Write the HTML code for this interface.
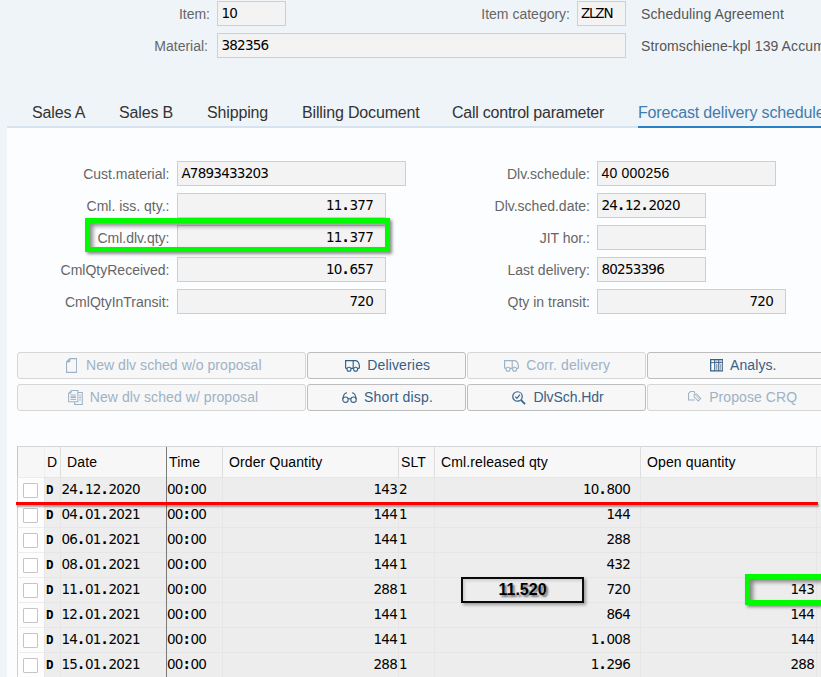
<!DOCTYPE html><html><head><meta charset="utf-8"><title>Scheduling Agreement</title><style>
html,body{margin:0;padding:0;}
body{width:821px;height:677px;overflow:hidden;background:#eff4f9;position:relative;font-family:"Liberation Sans",Arial,sans-serif;font-size:14px;color:#333;}
.abs{position:absolute;}
.lbl{position:absolute;color:#666;font-size:14px;line-height:26px;height:26px;text-align:right;white-space:nowrap;}
.inp{position:absolute;box-sizing:border-box;height:25px;border:1px solid #cfcfcf;background:#f3f3f3;font-family:"DejaVu Sans","Liberation Mono",monospace;font-size:13.5px;letter-spacing:-0.76px;line-height:23px;color:#000;padding:0 3.4px;white-space:nowrap;overflow:hidden;}
.inp.r{text-align:right;padding-right:12px;}
.txt{position:absolute;color:#555;font-size:14px;letter-spacing:0.1px;line-height:24px;white-space:nowrap;}
.tab{position:absolute;top:101px;font-size:16px;letter-spacing:-0.15px;line-height:24px;color:#333;white-space:nowrap;}
.tab.act{color:#427cac;}
.panel{position:absolute;left:7px;top:128px;width:820px;height:560px;background:#fcfdfe;}
.btn{position:absolute;box-sizing:border-box;height:27px;border:1px solid #bdbdbd;border-radius:3px;background:#f7f7f7;color:#346187;font-size:14px;letter-spacing:0.15px;line-height:25px;text-align:left;white-space:nowrap;}
.btn.dis{border-color:#d6d6d6;color:#9db2c6;}
.btn svg{display:block;}
.bi{position:absolute;}
.bt{position:absolute;top:0;}
.th{position:absolute;top:446px;height:31px;box-sizing:border-box;background:#f7f7f7;border-left:1px solid #dedede;border-top:1px solid #d6d6d6;color:#000;font-size:14px;letter-spacing:0.12px;line-height:30px;padding-left:6px;white-space:nowrap;overflow:hidden;}
.td{position:absolute;height:25px;box-sizing:border-box;background:#ededed;border-left:1px solid #e6e6e6;border-top:1px solid #e6e6e6;font-family:"DejaVu Sans","Liberation Mono",monospace;font-size:13.5px;letter-spacing:-0.76px;line-height:22px;color:#000;white-space:nowrap;overflow:hidden;}
.td.r{text-align:right;}
.sel{position:absolute;left:17px;width:27px;height:25px;box-sizing:border-box;background:#fdfdfd;border-left:1px solid #cfcfcf;border-top:1px solid #ececec;}
.inp i,.td i{font-style:normal;display:inline-block;width:7.83px;text-align:center;letter-spacing:0;font-weight:bold;}
.cb{position:absolute;left:23px;width:15px;height:15px;box-sizing:border-box;border:1px solid #c8c3c8;background:#fff;border-radius:1px;}
</style></head><body>
<div class="lbl" style="left:100px;width:110px;top:1px">Item:</div>
<div class="inp" style="left:217px;top:1px;width:69px">10</div>
<div class="lbl" style="left:430px;width:140px;top:1px">Item category:</div>
<div class="inp" style="left:577px;top:1px;width:49px;letter-spacing:-1.2px;padding-left:3px">ZLZN</div>
<div class="txt" style="left:641px;top:2px">Scheduling Agreement</div>
<div class="lbl" style="left:100px;width:108px;top:33px">Material:</div>
<div class="inp" style="left:217px;top:33px;width:409px">382356</div>
<div class="txt" style="left:641px;top:34px">Stromschiene-kpl 139 Accumulator</div>
<div class="tab" style="left:32px">Sales A</div>
<div class="tab" style="left:119px">Sales B</div>
<div class="tab" style="left:207px">Shipping</div>
<div class="tab" style="left:302px">Billing Document</div>
<div class="tab" style="left:452px;letter-spacing:-0.24px">Call control parameter</div>
<div class="tab act" style="left:638px">Forecast delivery schedule</div>
<div class="abs" style="left:7px;top:126px;width:820px;height:2px;background:#d8e3f0"></div>
<div class="abs" style="left:638px;top:126px;width:190px;height:2px;background:#2a80c4"></div>
<div class="panel"></div>
<div class="lbl" style="left:20px;width:149.5px;top:161px">Cust.material:</div>
<div class="inp" style="left:177px;top:161px;width:229px">A7893433203</div>
<div class="lbl" style="left:20px;width:149.5px;top:193px">Cml. iss. qty.:</div>
<div class="inp r" style="left:177px;top:193px;width:209px">11<i>.</i>377</div>
<div class="lbl" style="left:20px;width:149.5px;top:225px">Cml.dlv.qty:</div>
<div class="inp r" style="left:177px;top:225px;width:209px">11<i>.</i>377</div>
<div class="lbl" style="left:20px;width:149.5px;top:257px">CmlQtyReceived:</div>
<div class="inp r" style="left:177px;top:257px;width:209px">10<i>.</i>657</div>
<div class="lbl" style="left:20px;width:149.5px;top:289px">CmlQtyInTransit:</div>
<div class="inp r" style="left:177px;top:289px;width:209px">720</div>
<div class="lbl" style="left:440px;width:150px;top:161px">Dlv.schedule:</div>
<div class="inp" style="left:597px;top:161px;width:179px;font-family:'Liberation Sans',sans-serif;font-size:14px;letter-spacing:0.2px">40 000256</div>
<div class="lbl" style="left:440px;width:150px;top:193px">Dlv.sched.date:</div>
<div class="inp" style="left:597px;top:193px;width:109px">24<i>.</i>12<i>.</i>2020</div>
<div class="lbl" style="left:440px;width:150px;top:225px">JIT hor.:</div>
<div class="inp" style="left:597px;top:225px;width:109px"></div>
<div class="lbl" style="left:440px;width:150px;top:257px">Last delivery:</div>
<div class="inp" style="left:597px;top:257px;width:109px">80253396</div>
<div class="lbl" style="left:440px;width:150px;top:289px">Qty in transit:</div>
<div class="inp r" style="left:597px;top:289px;width:189px">720</div>
<div class="abs" style="left:85px;top:218px;width:305px;height:34px;box-sizing:border-box;border:5px solid #00fb00;box-shadow:2px 2px 3px rgba(0,0,0,.45), inset 3px 3px 4px rgba(0,0,0,.45)"></div>
<div class="btn dis" style="left:17px;top:352px;width:289px"><span class="bi" style="left:47.5px;top:4.8px"><svg width="11.2" height="15" viewBox="0 0 12 16"><path d="M4.2 .6H11.4V15.4H.6V4.2Z" fill="none" stroke="currentColor" stroke-width="1.2"/><path d="M4.2 .6V4.2H.6Z" fill="currentColor" stroke="currentColor" stroke-width=".8"/></svg></span><span class="bt" style="left:68.0px;letter-spacing:0.05px">New dlv sched w/o proposal</span></div>
<div class="btn" style="left:307px;top:352px;width:159px"><span class="bi" style="left:36.8px;top:6.8px"><svg width="15" height="12" viewBox="0 0 15 12"><path d="M.6 8.3V.6H8.2V8.3 M8.2 .6H10.8C13 .9 14 3 14.4 5.8V8.3 M.6 8.3H2 M6 8.3H8.6 M12.6 8.3H14.4" fill="none" stroke="currentColor" stroke-width="1.15"/><circle cx="4" cy="9.3" r="2" fill="none" stroke="currentColor" stroke-width="1.1"/><circle cx="10.6" cy="9.3" r="2" fill="none" stroke="currentColor" stroke-width="1.1"/></svg></span><span class="bt" style="left:59.2px;letter-spacing:0.16px">Deliveries</span></div>
<div class="btn dis" style="left:467px;top:352px;width:179px"><span class="bi" style="left:36.0px;top:6.8px"><svg width="15" height="12" viewBox="0 0 15 12"><path d="M.6 8.3V.6H8.2V8.3 M8.2 .6H10.8C13 .9 14 3 14.4 5.8V8.3 M.6 8.3H2 M6 8.3H8.6 M12.6 8.3H14.4" fill="none" stroke="currentColor" stroke-width="1.15"/><circle cx="4" cy="9.3" r="2" fill="none" stroke="currentColor" stroke-width="1.1"/><circle cx="10.6" cy="9.3" r="2" fill="none" stroke="currentColor" stroke-width="1.1"/></svg></span><span class="bt" style="left:58.2px;letter-spacing:0.11px">Corr. delivery</span></div>
<div class="btn" style="left:647px;top:352px;width:191px"><span class="bi" style="left:61.5px;top:6.0px"><svg width="13.5" height="12.6" viewBox="0 0 14 13"><path d="M.7 .7H13.3V12.3H.7Z" fill="#fdfdfd" stroke="currentColor" stroke-width="1.3"/><path d="M.7 3.7H13.3" stroke="currentColor" stroke-width="1"/><path d="M4.9 .7V12.3 M9.1 .7V12.3" stroke="currentColor" stroke-width="1.1" fill="none"/><path d="M7 5.2v5.8 M11.2 5.2v5.8" stroke="#8f93a6" stroke-width="1.3" fill="none"/><path d="M6.2 2.2h1.6 M10.4 2.2h1.6" stroke="#8f93a6" stroke-width="1" fill="none"/></svg></span><span class="bt" style="left:82.0px;letter-spacing:0.10px">Analys.</span></div>
<div class="btn dis" style="left:17px;top:384px;width:289px"><span class="bi" style="left:49.8px;top:4.8px"><svg width="15.2" height="15.2" viewBox="0 0 16 16"><path d="M3.6 .6H10.4V12.4H.6V3.6Z" fill="none" stroke="currentColor" stroke-width="1.1"/><path d="M3.6 .6V3.6H.6Z" fill="currentColor"/><path d="M2.6 5.3h5.8 M2.6 10h5.8" stroke="currentColor" stroke-width="1" fill="none"/><path d="M2.6 7.6h5.8" stroke="currentColor" stroke-width="1.8" fill="none"/><path d="M10.4 2.6H15V15.2H7V12.6" fill="none" stroke="currentColor" stroke-width="1.1"/><path d="M11.8 5.5h1.8 M11.8 10.5h1.8" stroke="currentColor" stroke-width="1" fill="none"/><path d="M11.8 8h1.8" stroke="currentColor" stroke-width="1.6" fill="none"/></svg></span><span class="bt" style="left:71.7px;letter-spacing:0.08px">New dlv sched w/ proposal</span></div>
<div class="btn" style="left:307px;top:384px;width:159px"><span class="bi" style="left:33.8px;top:7.0px"><svg width="15" height="11.25" viewBox="0 0 16 12"><circle cx="3.7" cy="8.2" r="2.9" fill="none" stroke="currentColor" stroke-width="1.15"/><circle cx="12.3" cy="8.2" r="2.9" fill="none" stroke="currentColor" stroke-width="1.15"/><path d="M6.5 7.6Q8 6.6 9.5 7.6 M.9 7.6C1.2 4.5 2.6 1 5.4 .8 M15.1 7.6C14.8 4.5 13.4 1 10.6 .8" fill="none" stroke="currentColor" stroke-width="1.15"/></svg></span><span class="bt" style="left:56.1px;letter-spacing:0.19px">Short disp.</span></div>
<div class="btn" style="left:467px;top:384px;width:179px"><span class="bi" style="left:43.5px;top:5.6px"><svg width="14.2" height="14.2" viewBox="0 0 15 15"><circle cx="5.8" cy="5.8" r="5" fill="none" stroke="currentColor" stroke-width="1.3"/><path d="M9.6 9.6L13.8 13.9" stroke="currentColor" stroke-width="1.9" fill="none"/><path d="M3.4 5.9L5.2 7.7L8.4 3.8" stroke="currentColor" stroke-width="1.2" fill="none"/></svg></span><span class="bt" style="left:65.4px;letter-spacing:-0.05px">DlvSch.Hdr</span></div>
<div class="btn dis" style="left:647px;top:384px;width:191px"><span class="bi" style="left:39.8px;top:6.0px"><svg width="14" height="11.2" viewBox="0 0 15 12"><path d="M7.2 9.6H.6V2.6L2.6 .6H6.6L7.4 2.4" fill="none" stroke="currentColor" stroke-width="1.1"/><path d="M6.6 3.4L9.2 3.2L13.6 8L11 10.8L6.6 6.2Z" fill="none" stroke="currentColor" stroke-width="1.1"/><path d="M8.4 4.6L12 8.6" stroke="currentColor" stroke-width=".9" fill="none"/></svg></span><span class="bt" style="left:61.2px;letter-spacing:0.08px">Propose CRQ</span></div>
<div class="th" style="left:17px;width:27px;border-left:1.5px solid #c6c6c6"></div>
<div class="th" style="left:44px;width:16px;padding-left:2px;border-left-color:#efefef;">D</div>
<div class="th" style="left:60px;width:106px;">Date</div>
<div class="th" style="left:166px;width:56px;padding-left:2px;">Time</div>
<div class="th" style="left:222px;width:176px;">Order Quantity</div>
<div class="th" style="left:398px;width:36px;padding-left:2px;">SLT</div>
<div class="th" style="left:434px;width:206px;">Cml.released qty</div>
<div class="th" style="left:640px;width:176px;">Open quantity</div>
<div class="th" style="left:816px;width:10px;"></div>
<div class="sel" style="top:477px"></div><div class="cb" style="top:483px"></div>
<div class="td" style="left:44px;top:477px;width:16px;font-family:'DejaVu Sans Mono','Liberation Mono',monospace;font-weight:bold;font-size:12.5px;letter-spacing:0;padding-left:1px;line-height:23px;">D</div>
<div class="td" style="left:60px;top:477px;width:106px;padding-left:0.5px;">24<i>.</i>12<i>.</i>2020</div>
<div class="td" style="left:166px;top:477px;width:56px;">00<i>:</i>00</div>
<div class="td r" style="left:222px;top:477px;width:176px;padding-right:1px;">143</div>
<div class="td" style="left:398px;top:477px;width:36px;">2</div>
<div class="td r" style="left:434px;top:477px;width:206px;padding-right:10px;">10<i>.</i>800</div>
<div class="td r" style="left:640px;top:477px;width:176px;padding-right:2px;"></div>
<div class="td" style="left:816px;top:477px;width:10px;"></div>
<div class="sel" style="top:502px"></div><div class="cb" style="top:508px"></div>
<div class="td" style="left:44px;top:502px;width:16px;font-family:'DejaVu Sans Mono','Liberation Mono',monospace;font-weight:bold;font-size:12.5px;letter-spacing:0;padding-left:1px;line-height:23px;">D</div>
<div class="td" style="left:60px;top:502px;width:106px;padding-left:0.5px;">04<i>.</i>01<i>.</i>2021</div>
<div class="td" style="left:166px;top:502px;width:56px;">00<i>:</i>00</div>
<div class="td r" style="left:222px;top:502px;width:176px;padding-right:1px;">144</div>
<div class="td" style="left:398px;top:502px;width:36px;">1</div>
<div class="td r" style="left:434px;top:502px;width:206px;padding-right:10px;">144</div>
<div class="td r" style="left:640px;top:502px;width:176px;padding-right:2px;"></div>
<div class="td" style="left:816px;top:502px;width:10px;"></div>
<div class="sel" style="top:527px"></div><div class="cb" style="top:533px"></div>
<div class="td" style="left:44px;top:527px;width:16px;font-family:'DejaVu Sans Mono','Liberation Mono',monospace;font-weight:bold;font-size:12.5px;letter-spacing:0;padding-left:1px;line-height:23px;">D</div>
<div class="td" style="left:60px;top:527px;width:106px;padding-left:0.5px;">06<i>.</i>01<i>.</i>2021</div>
<div class="td" style="left:166px;top:527px;width:56px;">00<i>:</i>00</div>
<div class="td r" style="left:222px;top:527px;width:176px;padding-right:1px;">144</div>
<div class="td" style="left:398px;top:527px;width:36px;">1</div>
<div class="td r" style="left:434px;top:527px;width:206px;padding-right:10px;">288</div>
<div class="td r" style="left:640px;top:527px;width:176px;padding-right:2px;"></div>
<div class="td" style="left:816px;top:527px;width:10px;"></div>
<div class="sel" style="top:552px"></div><div class="cb" style="top:558px"></div>
<div class="td" style="left:44px;top:552px;width:16px;font-family:'DejaVu Sans Mono','Liberation Mono',monospace;font-weight:bold;font-size:12.5px;letter-spacing:0;padding-left:1px;line-height:23px;">D</div>
<div class="td" style="left:60px;top:552px;width:106px;padding-left:0.5px;">08<i>.</i>01<i>.</i>2021</div>
<div class="td" style="left:166px;top:552px;width:56px;">00<i>:</i>00</div>
<div class="td r" style="left:222px;top:552px;width:176px;padding-right:1px;">144</div>
<div class="td" style="left:398px;top:552px;width:36px;">1</div>
<div class="td r" style="left:434px;top:552px;width:206px;padding-right:10px;">432</div>
<div class="td r" style="left:640px;top:552px;width:176px;padding-right:2px;"></div>
<div class="td" style="left:816px;top:552px;width:10px;"></div>
<div class="sel" style="top:577px"></div><div class="cb" style="top:583px"></div>
<div class="td" style="left:44px;top:577px;width:16px;font-family:'DejaVu Sans Mono','Liberation Mono',monospace;font-weight:bold;font-size:12.5px;letter-spacing:0;padding-left:1px;line-height:23px;">D</div>
<div class="td" style="left:60px;top:577px;width:106px;padding-left:0.5px;">11<i>.</i>01<i>.</i>2021</div>
<div class="td" style="left:166px;top:577px;width:56px;">00<i>:</i>00</div>
<div class="td r" style="left:222px;top:577px;width:176px;padding-right:1px;">288</div>
<div class="td" style="left:398px;top:577px;width:36px;">1</div>
<div class="td r" style="left:434px;top:577px;width:206px;padding-right:10px;">720</div>
<div class="td r" style="left:640px;top:577px;width:176px;padding-right:2px;">143</div>
<div class="td" style="left:816px;top:577px;width:10px;"></div>
<div class="sel" style="top:602px"></div><div class="cb" style="top:608px"></div>
<div class="td" style="left:44px;top:602px;width:16px;font-family:'DejaVu Sans Mono','Liberation Mono',monospace;font-weight:bold;font-size:12.5px;letter-spacing:0;padding-left:1px;line-height:23px;">D</div>
<div class="td" style="left:60px;top:602px;width:106px;padding-left:0.5px;">12<i>.</i>01<i>.</i>2021</div>
<div class="td" style="left:166px;top:602px;width:56px;">00<i>:</i>00</div>
<div class="td r" style="left:222px;top:602px;width:176px;padding-right:1px;">144</div>
<div class="td" style="left:398px;top:602px;width:36px;">1</div>
<div class="td r" style="left:434px;top:602px;width:206px;padding-right:10px;">864</div>
<div class="td r" style="left:640px;top:602px;width:176px;padding-right:2px;">144</div>
<div class="td" style="left:816px;top:602px;width:10px;"></div>
<div class="sel" style="top:627px"></div><div class="cb" style="top:633px"></div>
<div class="td" style="left:44px;top:627px;width:16px;font-family:'DejaVu Sans Mono','Liberation Mono',monospace;font-weight:bold;font-size:12.5px;letter-spacing:0;padding-left:1px;line-height:23px;">D</div>
<div class="td" style="left:60px;top:627px;width:106px;padding-left:0.5px;">14<i>.</i>01<i>.</i>2021</div>
<div class="td" style="left:166px;top:627px;width:56px;">00<i>:</i>00</div>
<div class="td r" style="left:222px;top:627px;width:176px;padding-right:1px;">144</div>
<div class="td" style="left:398px;top:627px;width:36px;">1</div>
<div class="td r" style="left:434px;top:627px;width:206px;padding-right:10px;">1<i>.</i>008</div>
<div class="td r" style="left:640px;top:627px;width:176px;padding-right:2px;">144</div>
<div class="td" style="left:816px;top:627px;width:10px;"></div>
<div class="sel" style="top:652px"></div><div class="cb" style="top:658px"></div>
<div class="td" style="left:44px;top:652px;width:16px;font-family:'DejaVu Sans Mono','Liberation Mono',monospace;font-weight:bold;font-size:12.5px;letter-spacing:0;padding-left:1px;line-height:23px;">D</div>
<div class="td" style="left:60px;top:652px;width:106px;padding-left:0.5px;">15<i>.</i>01<i>.</i>2021</div>
<div class="td" style="left:166px;top:652px;width:56px;">00<i>:</i>00</div>
<div class="td r" style="left:222px;top:652px;width:176px;padding-right:1px;">288</div>
<div class="td" style="left:398px;top:652px;width:36px;">1</div>
<div class="td r" style="left:434px;top:652px;width:206px;padding-right:10px;">1<i>.</i>296</div>
<div class="td r" style="left:640px;top:652px;width:176px;padding-right:2px;">288</div>
<div class="td" style="left:816px;top:652px;width:10px;"></div>
<div class="abs" style="left:166px;top:447px;width:1px;height:240px;background:#7a7a7a"></div>
<div class="abs" style="left:16px;top:502px;width:802px;height:3px;background:#fe0000;border-radius:0;box-shadow:1px 2px 2px rgba(0,0,0,.35)"></div>
<div class="abs" style="left:461px;top:577px;width:123px;height:26px;box-sizing:border-box;border:2px solid #0a0a0a;background:#ededed;box-shadow:2px 2px 3px rgba(0,0,0,.35), inset 2px 2px 3px rgba(0,0,0,.12);text-align:center;font-family:'Liberation Sans',sans-serif;font-weight:bold;font-size:16px;line-height:22px;color:#000;text-shadow:2px 2px 2px rgba(0,0,0,.5)">11.520</div>
<div class="abs" style="left:745px;top:574px;width:90px;height:31px;box-sizing:border-box;border:5px solid #00fb00;box-shadow:2px 2px 3px rgba(0,0,0,.45), inset 3px 3px 4px rgba(0,0,0,.45)"></div>
</body></html>
